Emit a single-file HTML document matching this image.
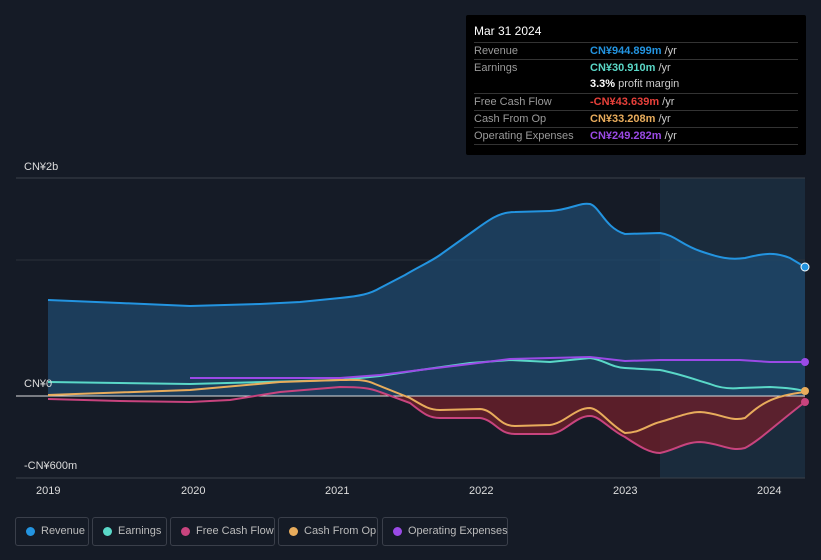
<!DOCTYPE html>
<html><head><meta charset="utf-8"><style>
*{margin:0;padding:0;box-sizing:border-box}
html,body{width:821px;height:560px}
body{background:#151b26;font-family:"Liberation Sans",sans-serif;position:relative;overflow:hidden;color:#ccc}
.tip{position:absolute;left:466px;top:15px;width:340px;height:140px;background:#000;border-radius:2px;padding:8px 8px}
.tip .h{color:#fff;font-size:12px;height:17px;line-height:17px;margin-bottom:2px}
.row{display:flex;font-size:11px;height:17px;line-height:17px;border-top:1px solid #333}
.row .l{width:116px;color:#9a9a9a}
.row.nb{border-top:none}
.leg{position:absolute;top:517px;height:29px;border:1px solid #3a3f4a;border-radius:3px;font-size:11px;color:#bbb;line-height:27px;padding-left:25px;white-space:nowrap}
.leg i{position:absolute;left:10px;top:9px;width:9px;height:9px;border-radius:50%}
.ax{position:absolute;font-size:11px;color:#ddd}
</style></head><body>
<svg width="821" height="560" style="position:absolute;left:0;top:0">
<rect x="660" y="178" width="145" height="300" fill="#1a2b3c"/>
<line x1="16" y1="178" x2="805" y2="178" stroke="#3a404a"/>
<line x1="16" y1="260" x2="805" y2="260" stroke="#2a303a"/>
<line x1="16" y1="478" x2="805" y2="478" stroke="#3a404a"/>
<path d="M48,300 L120,303 L190,306 L260,304 L300,302 L340,298 C360,296 370,294 380,288 L405,275 C420,266 430,262 440,255 L475,230 C490,219 500,212 515,212 L550,211 C570,210 580,202 590,204 C600,207 605,228 625,234 L660,233 C675,235 680,244 700,251 C720,258 730,260 745,258 C765,253 775,252 790,258 L805,267 L805,396 L48,396Z" fill="#1f4a6e" fill-opacity="0.75"/>
<path d="M48,300 L120,303 L190,306 L260,304 L300,302 L340,298 C360,296 370,294 380,288 L405,275 C420,266 430,262 440,255 L475,230 C490,219 500,212 515,212 L550,211 C570,210 580,202 590,204 C600,207 605,228 625,234 L660,233 C675,235 680,244 700,251 C720,258 730,260 745,258 C765,253 775,252 790,258 L805,267" fill="none" stroke="#2394e0" stroke-width="2"/>
<path d="M380,392 L410,403 C425,415 430,418 440,418 L480,418 C495,420 498,434 515,434 L550,434 C565,433 575,416 590,416 C600,416 610,430 625,437 C640,447 650,453 660,453 C675,450 685,442 700,442 C720,443 730,452 745,448 C760,440 775,425 805,402 L805,396 L380,396Z" fill="#6b1f2a" fill-opacity="0.8"/>
<line x1="16" y1="396" x2="805" y2="396" stroke="#ddd" stroke-width="1"/>
<path d="M48,382 L190,384 L340,380 L380,376 L420,370 L470,363 L510,360 L550,362 L590,358 C605,360 610,367 625,368 L660,370 C680,374 690,378 710,384 C720,388 730,389 740,388 L770,387 C790,388 795,389 805,391" fill="none" stroke="#5ad8c8" stroke-width="2"/>
<path d="M190,378 L340,378 L380,375 L420,370 L470,364 L510,359 L550,358 L590,357 L625,361 L660,360 L740,360 L770,362 L805,362" fill="none" stroke="#9a4ae6" stroke-width="2"/>
<path d="M48,399 L120,401 L190,402 L230,400 L280,392 L340,387 C360,387 370,388 380,392 L410,403 C425,415 430,418 440,418 L480,418 C495,420 498,434 515,434 L550,434 C565,433 575,416 590,416 C600,416 610,430 625,437 C640,447 650,453 660,453 C675,450 685,442 700,442 C720,443 730,452 745,448 C760,440 775,425 805,402" fill="none" stroke="#c8447e" stroke-width="2"/>
<path d="M48,395 L190,390 L280,382 L340,380 C355,380 365,379 375,384 L410,398 C425,407 430,410 440,410 L480,409 C495,410 498,426 515,426 L550,425 C565,423 575,408 590,408 C600,409 610,425 625,433 C640,433 650,424 660,422 C680,416 690,412 700,412 C720,413 730,422 745,418 C760,405 770,396 805,392" fill="none" stroke="#e8ac5c" stroke-width="2"/>
<circle cx="805" cy="267" r="4" fill="#2394e0" stroke="#fff" stroke-width="1"/>
<circle cx="805" cy="362" r="4" fill="#9a4ae6"/>
<circle cx="805" cy="391" r="4" fill="#e8ac5c"/>
<circle cx="805" cy="402" r="4" fill="#c8447e"/>
</svg>
<div class="ax" style="left:24px;top:161px">CN¥2b</div>
<div class="ax" style="left:24px;top:378px">CN¥0</div>
<div class="ax" style="left:24px;top:460px">-CN¥600m</div>
<div class="ax" style="left:36px;top:485px">2019</div>
<div class="ax" style="left:181px;top:485px">2020</div>
<div class="ax" style="left:325px;top:485px">2021</div>
<div class="ax" style="left:469px;top:485px">2022</div>
<div class="ax" style="left:613px;top:485px">2023</div>
<div class="ax" style="left:757px;top:485px">2024</div>
<div class="tip">
<div class="h">Mar 31 2024</div>
<div class="row"><span class="l">Revenue</span><span><b style="color:#2394e0">CN¥944.899m</b> /yr</span></div>
<div class="row"><span class="l">Earnings</span><span><b style="color:#5ad8c8">CN¥30.910m</b> /yr</span></div>
<div class="row nb"><span class="l"></span><span><b style="color:#fff">3.3%</b> profit margin</span></div>
<div class="row"><span class="l">Free Cash Flow</span><span><b style="color:#e8403a">-CN¥43.639m</b> /yr</span></div>
<div class="row"><span class="l">Cash From Op</span><span><b style="color:#e8ac5c">CN¥33.208m</b> /yr</span></div>
<div class="row"><span class="l">Operating Expenses</span><span><b style="color:#9a4ae6">CN¥249.282m</b> /yr</span></div>
<div class="row" style="height:1px"></div>
</div>
<div class="leg" style="left:15px;width:74px"><i style="background:#2394e0"></i>Revenue</div>
<div class="leg" style="left:92px;width:75px"><i style="background:#5ad8c8"></i>Earnings</div>
<div class="leg" style="left:170px;width:105px"><i style="background:#c8447e"></i>Free Cash Flow</div>
<div class="leg" style="left:278px;width:100px"><i style="background:#e8ac5c"></i>Cash From Op</div>
<div class="leg" style="left:382px;width:126px"><i style="background:#9a4ae6"></i>Operating Expenses</div>
</body></html>
